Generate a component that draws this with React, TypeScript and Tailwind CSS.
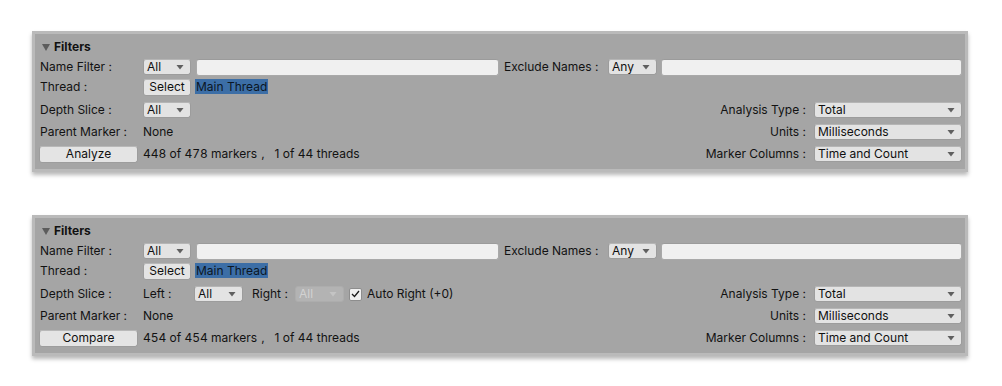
import React from "react";

const font = { fontFamily: "Inter, 'Noto Sans', sans-serif" };

function Arrow({ disabled }: { disabled?: boolean }) {
  return (
    <svg width="8" height="5" viewBox="0 0 8 5" className="shrink-0">
      <path d="M0.5 0 L7.5 0 L4 4.5 Z" fill={disabled ? "#c4c4c4" : "#5f5f5f"} />
    </svg>
  );
}

function Dropdown({ text, w, disabled }: { text: string; w: string; disabled?: boolean }) {
  return (
    <div
      className={`${w} h-[16px] rounded-[3px] border flex items-center justify-between pl-[3px] pr-[6px] ${
        disabled
          ? "bg-[#b3b3b3] border-[#adadad] text-[#d2d2d2]"
          : "bg-[#e3e3e3] border-[#9c9c9c] border-t-[#b5b5b5] text-[#101010]"
      }`}
    >
      <span className="leading-none">{text}</span>
      <Arrow disabled={disabled} />
    </div>
  );
}

function TextInput({ w }: { w: string }) {
  return <div className={`${w} h-[17px] rounded-[3px] bg-[#f0f0f0] border border-[#a9a9a9] border-t-[#9b9b9b]`} />;
}

function Button({ text, w }: { text: string; w: string }) {
  return (
    <div
      className={`${w} h-[17px] rounded-[3px] bg-[#e4e4e4] border border-[#9d9d9d] border-t-[#b8b8b8] flex items-center justify-center text-[#101010] leading-none`}
    >
      {text}
    </div>
  );
}

function Label({ children }: { children: React.ReactNode }) {
  return <div className="w-[104px] shrink-0 pl-[1px]">{children}</div>;
}

function RightField({ label, value }: { label: string; value: string }) {
  return (
    <div className="ml-auto flex items-center">
      <span className="mr-[8px]">{label}</span>
      <Dropdown text={value} w="w-[148px]" />
    </div>
  );
}

function Panel({ compare }: { compare?: boolean }) {
  return (
    <div className="w-[936px] h-[141px] border-[3px] border-[#bababa] bg-[#a5a5a5] shadow-[0_3px_4px_rgba(0,0,0,0.28)] text-[12px] text-[#121212] pl-[4px] pr-[3px] pt-[4px]" style={font}>
      <div className="h-[18px] flex items-center pl-[3px]">
        <svg width="8" height="7" viewBox="0 0 8 7" className="mr-[4px]">
          <path d="M0 0 L8 0 L4 7 Z" fill="#5c5c5c" />
        </svg>
        <span className="font-bold text-[#111]">Filters</span>
      </div>
      <div className="mt-[2px] h-[18px] flex items-center">
        <Label>Name Filter :</Label>
        <Dropdown text="All" w="w-[48px]" />
        <div className="ml-[5px]">
          <TextInput w="w-[303px]" />
        </div>
        <div className="ml-[5px] w-[104px] shrink-0">Exclude Names :</div>
        <Dropdown text="Any" w="w-[49px]" />
        <div className="ml-[4px] flex-1">
          <TextInput w="w-full" />
        </div>
      </div>
      <div className="mt-[2px] h-[18px] flex items-center">
        <Label>Thread :</Label>
        <Button text="Select" w="w-[48px]" />
        <span className="ml-[4px] mb-[2px] bg-[#3c6ea6] h-[15px] leading-[15px] px-[1px] text-[#0b1624]">Main Thread</span>
      </div>
      <div className="mt-[5px] h-[18px] flex items-center">
        <Label>Depth Slice :</Label>
        {compare ? (
          <>
            <span className="w-[51px]">Left :</span>
            <Dropdown text="All" w="w-[49px]" />
            <span className="ml-[9px] w-[43px]">Right :</span>
            <Dropdown text="All" w="w-[49px]" disabled />
            <div className="ml-[5px] w-[13px] h-[13px] rounded-[2px] bg-[#f0f0f0] border border-[#8d8d8d] flex items-center justify-center">
              <svg width="9" height="8" viewBox="0 0 9 8">
                <path d="M1 4 L3.5 6.5 L8 1" stroke="#1a1a1a" strokeWidth="1.3" fill="none" />
              </svg>
            </div>
            <span className="ml-[5px]">Auto Right (+0)</span>
          </>
        ) : (
          <Dropdown text="All" w="w-[48px]" />
        )}
        <RightField label="Analysis Type :" value="Total" />
      </div>
      <div className="mt-[4px] h-[18px] flex items-center">
        <Label>Parent Marker :</Label>
        <span>None</span>
        <RightField label="Units :" value="Milliseconds" />
      </div>
      <div className="mt-[4px] h-[18px] flex items-center">
        <Button text={compare ? "Compare" : "Analyze"} w="w-[99px]" />
        <span className="ml-[5px] tabular-nums">{compare ? "454 of 454 markers" : "448 of 478 markers"}</span>
        <span className="ml-[4px]">,</span>
        <span className="ml-[10px]">1 of 44 threads</span>
        <RightField label="Marker Columns :" value="Time and Count" />
      </div>
    </div>
  );
}

export default function App() {
  return (
    <div className="w-[1002px] h-[386px] bg-white pt-[31px] pl-[32px]">
      <Panel />
      <div className="mt-[43px]">
        <Panel compare />
      </div>
    </div>
  );
}
